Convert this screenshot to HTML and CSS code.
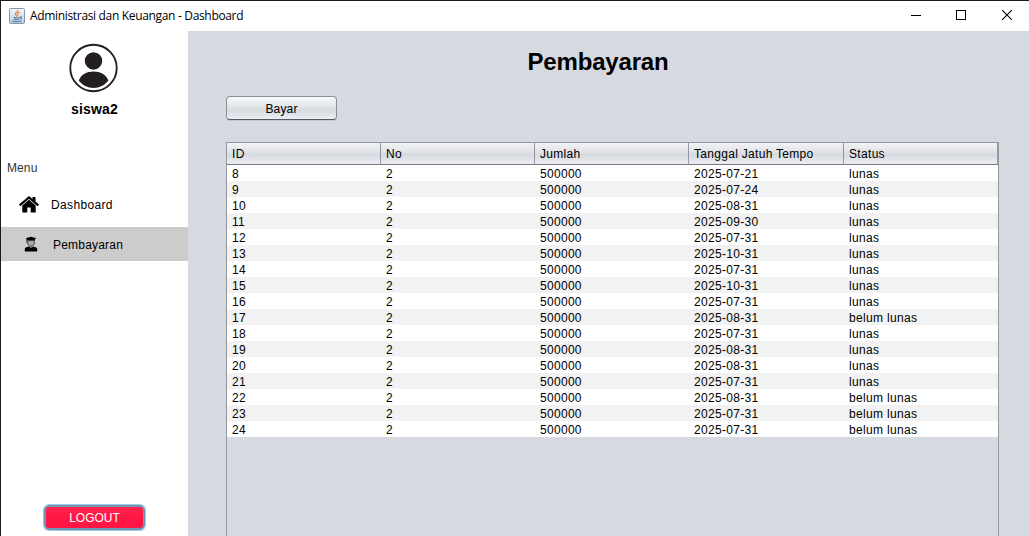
FILE: index.html
```html
<!DOCTYPE html>
<html lang="id">
<head>
<meta charset="utf-8">
<title>Administrasi dan Keuangan - Dashboard</title>
<link rel="stylesheet" href="styles.css">
</head>
<body>
<div class="window">
  <header class="titlebar">
    <svg class="java" width="16" height="16" viewBox="0 0 16 16">
      <defs><linearGradient id="jg" x1="0" y1="0" x2="0" y2="1"><stop offset="0" stop-color="#f4f7fa"/><stop offset="1" stop-color="#bccbd9"/></linearGradient></defs>
      <rect x=".5" y=".5" width="15" height="15" rx="1" fill="url(#jg)" stroke="#8497ab"/>
      <path d="M9 1.8C9.5 4 5.5 4.600 6.500 6.500L8 8.600M10.500 4.200C8.500 5 8 6 9 7.500" fill="none" stroke="#ee8434" stroke-width="1.200"/>
      <path d="M4.500 9.200c1.500.8 4.500.8 6 0M5.300 11.200c1.400.6 3.400.6 4.700 0M3 12.600c2 1.500 7.500 1.500 9.500 0M11 9c2.200-.7 2.200 1.600 0 2.100" fill="none" stroke="#5080a5" stroke-width="1.100"/>
    </svg>
    <span class="caption">Administrasi dan Keuangan - Dashboard</span>
    <svg class="controls" width="138" height="30" viewBox="0 0 138 30" fill="none" stroke="#000">
      <path d="M20 14.500h10M65.500 9.500h9v9h-9z" shape-rendering="crispEdges"/>
      <path d="M111.200 9.200l9.600 9.600M120.800 9.200l-9.600 9.600" stroke-width="1.100"/>
    </svg>
  </header>
  <div class="body">
    <aside class="sidebar">
      <svg class="avatar" width="49" height="50" viewBox="0 0 50 50">
        <circle cx="25" cy="25" r="23.700" fill="#fff" stroke="#231f20" stroke-width="1.900"/>
        <circle cx="25" cy="17.800" r="8.900" fill="#231f20"/>
        <path d="M10 37.800C12.200 31.500 18 28.500 25 28.500S37.800 31.500 40.200 37.800C36.500 42.500 31 45.400 25 45.400S13.500 42.500 10 37.800Z" fill="#231f20"/>
      </svg>
      <div class="user">siswa2</div>
      <div class="menu-label">Menu</div>
      <nav>
        <div class="item">
          <svg width="20" height="17" viewBox="0 0 20 17"><path d="M13.500 1h3v5l-3-3z"/><path d="M.7 9.400L10 1.500l9.300 7.900" fill="none" stroke="#000" stroke-width="2.200"/><path d="M3.300 9.500L10 3.800l6.700 5.700v7h-5v-5H8.300v5h-5z"/></svg>
          <span>Dashboard</span>
        </div>
        <div class="item active">
          <svg width="14" height="16" viewBox="0 0 14 16"><path d="M1.500 2.300L7 .7l5.500 1.600L11 3v1.600H3V3z"/><path d="M3.700 4.500h6.600v2.300C10.300 8.800 8.800 10.300 7 10.300S3.700 8.800 3.700 6.800z" fill="#aaa" stroke="#333" stroke-width=".9"/><path d="M2.500 2.500v4.600" stroke="#444" stroke-width=".7"/><path d="M.8 15.500v-2.200c0-1.400 1.400-2.200 4-2.800L7 11.700l2.200-1.200c2.600.6 4 1.400 4 2.800v2.200z"/></svg>
          <span>Pembayaran</span>
        </div>
      </nav>
      <button class="logout">LOGOUT</button>
    </aside>
    <main class="content">
      <h1>Pembayaran</h1>
      <button class="bayar">Bayar</button>
      <div class="scroll">
        <div class="row head"><span>ID</span><span>No</span><span>Jumlah</span><span>Tanggal Jatuh Tempo</span><span>Status</span></div>
        <div class="rows">
          <div class="row"><span>8</span><span>2</span><span>500000</span><span>2025-07-21</span><span>lunas</span></div>
          <div class="row"><span>9</span><span>2</span><span>500000</span><span>2025-07-24</span><span>lunas</span></div>
          <div class="row"><span>10</span><span>2</span><span>500000</span><span>2025-08-31</span><span>lunas</span></div>
          <div class="row"><span>11</span><span>2</span><span>500000</span><span>2025-09-30</span><span>lunas</span></div>
          <div class="row"><span>12</span><span>2</span><span>500000</span><span>2025-07-31</span><span>lunas</span></div>
          <div class="row"><span>13</span><span>2</span><span>500000</span><span>2025-10-31</span><span>lunas</span></div>
          <div class="row"><span>14</span><span>2</span><span>500000</span><span>2025-07-31</span><span>lunas</span></div>
          <div class="row"><span>15</span><span>2</span><span>500000</span><span>2025-10-31</span><span>lunas</span></div>
          <div class="row"><span>16</span><span>2</span><span>500000</span><span>2025-07-31</span><span>lunas</span></div>
          <div class="row"><span>17</span><span>2</span><span>500000</span><span>2025-08-31</span><span>belum lunas</span></div>
          <div class="row"><span>18</span><span>2</span><span>500000</span><span>2025-07-31</span><span>lunas</span></div>
          <div class="row"><span>19</span><span>2</span><span>500000</span><span>2025-08-31</span><span>lunas</span></div>
          <div class="row"><span>20</span><span>2</span><span>500000</span><span>2025-08-31</span><span>lunas</span></div>
          <div class="row"><span>21</span><span>2</span><span>500000</span><span>2025-07-31</span><span>lunas</span></div>
          <div class="row"><span>22</span><span>2</span><span>500000</span><span>2025-08-31</span><span>belum lunas</span></div>
          <div class="row"><span>23</span><span>2</span><span>500000</span><span>2025-07-31</span><span>belum lunas</span></div>
          <div class="row"><span>24</span><span>2</span><span>500000</span><span>2025-07-31</span><span>belum lunas</span></div>
        </div>
      </div>
    </main>
  </div>
</div>
</body>
</html>
```
FILE: styles.css
```css
* { box-sizing: border-box; }
body { margin: 0; overflow: hidden; font: 12px/16px "Liberation Sans", Arial, sans-serif; color: #000; }
.window { width: 1029px; height: 536px; display: flex; flex-direction: column; background: #fff; border-top: 1px solid #1b1a1c; border-left: 1px solid #1b1a1c; }
.titlebar { height: 30px; flex: none; display: flex; align-items: center; padding-left: 8px; }
.java { flex: none; }
.caption { margin-left: 5px; font: 12px/16px "Open Sans", sans-serif; letter-spacing: -0.33px; white-space: nowrap; }
.controls { margin-left: auto; }
.body { flex: 1; display: flex; min-height: 0; }
.sidebar { width: 187px; flex: none; display: flex; flex-direction: column; padding-bottom: 6px; }
.avatar { margin: 12px 0 0 68px; flex: none; }
.user { margin-top: 8px; text-align: center; font-weight: bold; font-size: 14px; letter-spacing: 0.2px; }
.menu-label { margin: 43px 0 0 6px; height: 16px; color: #333; letter-spacing: 0.1px; }
nav { margin-top: 12px; display: flex; flex-direction: column; gap: 6px; }
.item { height: 33px; display: flex; align-items: center; padding-left: 18px; gap: 12px; letter-spacing: 0.35px; }
.item.active { height: 34px; background: #ccc; padding-left: 23px; gap: 15px; letter-spacing: 0.2px; }
.item.active span { padding-top: 1px; }
button { font: inherit; display: block; padding: 0; }
.logout { margin: auto 0 0 43px; width: 101px; height: 25px; flex: none; border: 1px solid #6793b7; border-radius: 5px; background: linear-gradient(#ff264f, #ff1744 50%, #ff1544); color: #fff; box-shadow: 0 0 0 1px #a5c8e1, inset 0 0 0 1px #739ab8; letter-spacing: 0; }
.content { flex: 1; display: flex; flex-direction: column; background: #d6d9e0; padding: 17px 30px 0 38px; }
h1 { margin: 0 0 0 2px; width: 740px; text-align: center; font-size: 24px; line-height: 28px; letter-spacing: -0.17px; }
.bayar { margin-top: 20px; width: 111px; height: 24px; flex: none; border: 1px solid #8b8f98; border-bottom-color: #55585e; border-radius: 4px; background: linear-gradient(#f7f8f9, #e4e6e9 40%, #d6d9df 60%, #eceef3); box-shadow: 0 1px 0 #c1c5cd; letter-spacing: 0.15px; padding-top: 1px; }
.scroll { margin-top: 22px; flex: 1; border: solid #9297a1; border-width: 1px 1px 0; }
.row { display: grid; grid-template-columns: 154px 154px 154px 155px 154px; height: 16px; line-height: 18px; background: #fff; letter-spacing: 0.3px; }
.row:nth-child(even) { background: #f2f2f2; }
.row span { padding-left: 5px; white-space: nowrap; }
.row span:last-child { letter-spacing: 0.32px; }
.row.head { height: 22px; line-height: 22px; border-bottom: 1px solid #73777f; background: linear-gradient(#f2f3f5, #dfe1e6 45%, #d6d9df 55%, #eceef3); letter-spacing: 0.3px; }
.head span { border-right: 1px solid #9297a1; }
```
